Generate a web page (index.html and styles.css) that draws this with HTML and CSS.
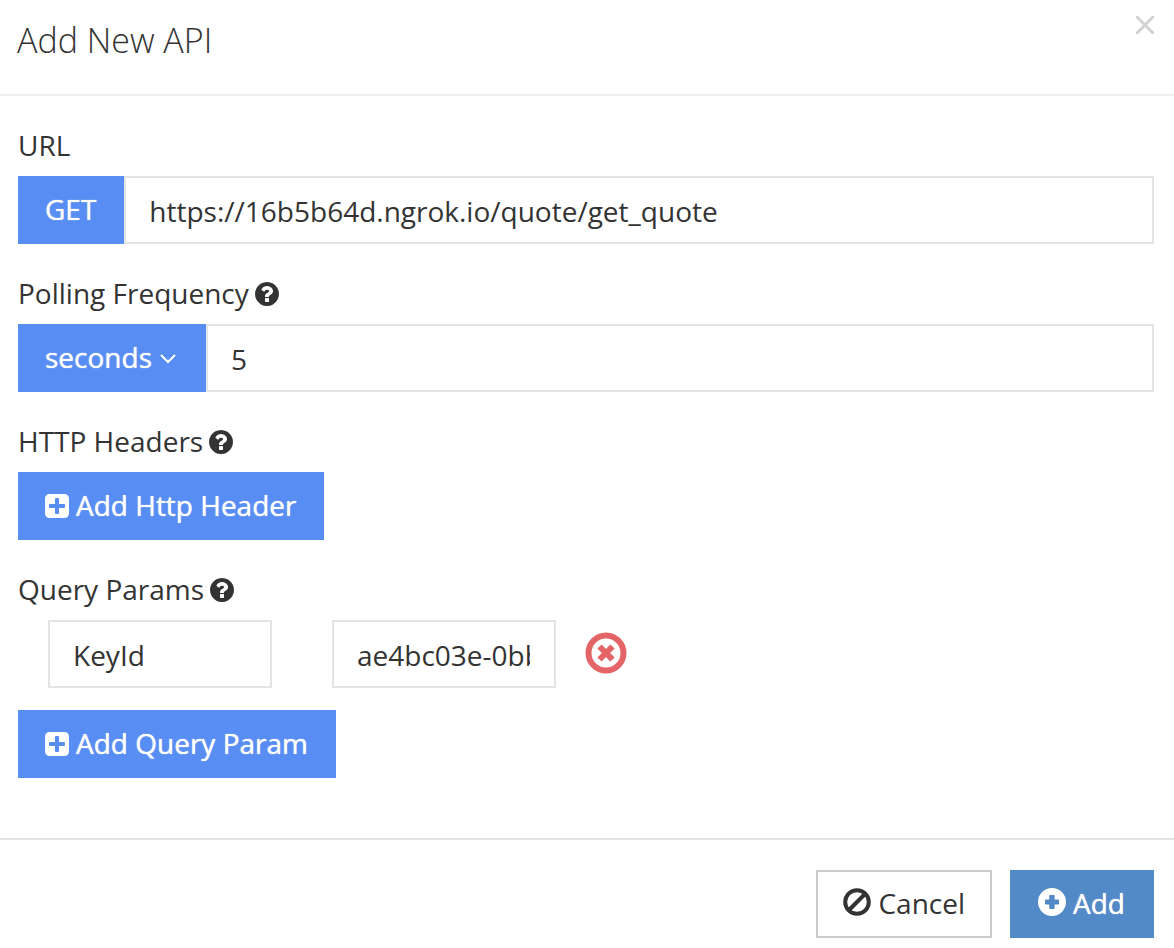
FILE: index.html
```html
<!DOCTYPE html>
<html lang="en">
<head>
<meta charset="utf-8">
<title>Add New API</title>
<link rel="stylesheet" href="styles.css">
</head>
<body>
<svg class="sprite" aria-hidden="true">
  <symbol id="help" viewBox="128 128 1536 1536"><path d="M1024 1376v-192q0-14-9-23t-23-9h-192q-14 0-23 9t-9 23v192q0 14 9 23t23 9h192q14 0 23-9t9-23zm256-672q0-88-55.5-163t-138.5-116-170-41q-243 0-371 213-15 24 8 42l132 100q7 6 19 6 16 0 25-12 53-68 86-92 34-24 86-24 48 0 85.5 26t37.5 59q0 38-20 61t-68 45q-63 28-115.5 86.5t-52.5 125.5v36q0 14 9 23t23 9h192q14 0 23-9t9-23q0-19 21.5-49.5t54.5-49.5q32-18 49-28.5t46-35 44.5-48 28-60.5 12.5-81zm384 192q0 209-103 385.5t-279.5 279.5-385.5 103-385.5-103-279.5-279.5-103-385.5 103-385.5 279.5-279.5 385.5-103 385.5 103 279.5 279.5 103 385.5z"/></symbol>
  <symbol id="plus-square" viewBox="0 0 24 24"><path fill-rule="evenodd" d="M4.5 0h15A4.5 4.5 0 0 1 24 4.500v15a4.500 4.500 0 0 1-4.500 4.500h-15A4.500 4.500 0 0 1 0 19.500v-15A4.500 4.500 0 0 1 4.500 0zM11 4a1 1 0 0 0-1 1v5H5a1 1 0 0 0-1 1v2a1 1 0 0 0 1 1h5V19a1 1 0 0 0 1 1h2a1 1 0 0 0 1-1v-5h5a1 1 0 0 0 1-1v-2a1 1 0 0 0-1-1h-5V5a1 1 0 0 0-1-1z"/></symbol>
</svg>
<form class="modal">
  <header class="modal-header">
    <h1 class="modal-title">Add New API</h1>
    <button class="close" type="button" aria-label="Close">
      <svg class="close-icon" viewBox="0 0 18 18"><path d="M0 0l18 18M18 0L0 18"/></svg>
    </button>
  </header>

  <main class="modal-body">
    <div class="group">
      <label class="label" for="url">URL</label>
      <div class="input-group">
        <button class="btn btn-blue" type="button">GET</button>
        <input class="input joined" id="url" type="text" value="https://16b5b64d.ngrok.io/quote/get_quote">
      </div>
    </div>

    <div class="group">
      <label class="label" for="frequency">Polling Frequency <svg class="help-icon"><use href="#help"/></svg></label>
      <div class="input-group">
        <div class="unit">
          <select class="btn btn-blue unit-select" aria-label="Polling unit"><option>seconds</option></select>
          <svg class="chevron" viewBox="0 0 16 10"><path d="M1 1l7 7 7-7"/></svg>
        </div>
        <input class="input joined" id="frequency" type="text" value="5">
      </div>
    </div>

    <div class="group">
      <div class="label">HTTP Headers <svg class="help-icon"><use href="#help"/></svg></div>
      <button class="btn btn-blue" type="button"><svg class="plus-icon"><use href="#plus-square"/></svg>Add Http Header</button>
    </div>

    <div class="group">
      <div class="label">Query Params <svg class="help-icon"><use href="#help"/></svg></div>
      <div class="param-row">
        <input class="input param" type="text" aria-label="Parameter name" value="KeyId">
        <input class="input param" type="text" aria-label="Parameter value" value="ae4bc03e-0bb4">
        <button class="remove" type="button" aria-label="Remove parameter">
          <svg class="remove-icon" viewBox="0 0 42 42"><circle cx="21" cy="21" r="17.500"/><path d="M14.500 14.500l13 13M27.500 14.500l-13 13"/></svg>
        </button>
      </div>
      <button class="btn btn-blue" type="button"><svg class="plus-icon"><use href="#plus-square"/></svg>Add Query Param</button>
    </div>
  </main>

  <footer class="modal-footer">
    <button class="btn btn-default" type="button"><svg class="round-icon ban" viewBox="0 0 28 28"><circle cx="14" cy="14" r="11.800"/><path d="M6 22L22 6"/></svg>Cancel</button>
    <button class="btn btn-primary" type="submit"><svg class="round-icon" viewBox="0 0 28 28"><path fill-rule="evenodd" d="M14 0a14 14 0 1 1 0 28a14 14 0 1 1 0-28zM12 7a.8.8 0 0 0-.8.8v3.700H7.800a.8.8 0 0 0-.8.8v3.400a.8.8 0 0 0 .8.8h3.400v3.700a.8.8 0 0 0 .8.8h3.800a.8.8 0 0 0 .8-.8v-3.700h3.600a.8.8 0 0 0 .8-.8v-3.400a.8.8 0 0 0-.8-.8h-3.600V7.800a.8.8 0 0 0-.8-.8z"/></svg>Add</button>
  </footer>
</form>
</body>
</html>
```
FILE: styles.css
```css
* {
  box-sizing: border-box;
}

body {
  margin: 0;
  background: #fff;
  color: #333;
  font: 28px/38px "Open Sans", sans-serif;
}

.sprite {
  display: none;
}

.modal-header {
  display: flex;
  justify-content: space-between;
  align-items: flex-start;
  padding: 16px 20px 30px 17px;
  border-bottom: 2px solid #efefef;
}

.modal-title {
  margin: 0;
  font-size: 34px;
  line-height: 48px;
  font-weight: 300;
}

.close,
.remove {
  display: flex;
  padding: 0;
  border: 0;
  background: none;
}

.close-icon {
  width: 18px;
  height: 18px;
  stroke: #d2d2d2;
  stroke-width: 3;
}

.modal-body {
  padding: 30px 20px 30px 18px;
}

.group {
  margin-bottom: 30px;
}

.label {
  display: block;
  height: 38px;
  margin-bottom: 12px;
}

.help-icon {
  width: 24px;
  height: 24px;
  margin-left: -1px;
  vertical-align: -2px;
  fill: #333;
}

.input-group {
  display: flex;
}

.btn {
  display: inline-flex;
  align-items: center;
  justify-content: center;
  height: 68px;
  padding: 0 28px 2px 27px;
  border: 0;
  border-radius: 0;
  color: #fff;
  font: inherit;
  white-space: nowrap;
}

.btn-blue {
  background: #588ef3;
  text-shadow: 0 0 1px #fff;
}

.input {
  min-width: 0;
  height: 68px;
  padding: 2px 24px 0 23px;
  border: 2px solid #e4e4e4;
  border-radius: 0;
  background: #fff;
  color: #333;
  font: inherit;
}

.joined {
  flex: 1;
}

.unit {
  display: flex;
  position: relative;
}

.unit-select {
  appearance: none;
  padding-right: 54px;
}

.chevron {
  position: absolute;
  right: 30px;
  top: 30px;
  width: 16px;
  height: 10px;
  fill: none;
  stroke: #fff;
  stroke-width: 2;
  pointer-events: none;
}

.plus-icon {
  width: 24px;
  height: 24px;
  margin: 2px 7px 0 0;
  fill: #fff;
}

.param-row {
  display: flex;
  align-items: center;
  margin: 0 0 22px 30px;
}

.param {
  width: 224px;
  margin-right: 60px;
}

.param + .param {
  margin-right: 29px;
}

.remove {
  padding-bottom: 2px;
}

.remove-icon {
  width: 42px;
  height: 42px;
  fill: none;
  stroke: #e46567;
  stroke-width: 6;
}

.modal-footer {
  display: flex;
  justify-content: flex-end;
  gap: 18px;
  padding: 30px 20px 10px;
  border-top: 2px solid #e4e4e4;
}

.btn-default {
  padding: 0 25px 2px;
  border: 2px solid #ccc;
  background: #fff;
  color: #333;
}

.btn-primary {
  padding: 0 29px 2px 28px;
  background: #5289c7;
  text-shadow: 0 0 1px #fff;
}

.round-icon {
  width: 28px;
  height: 28px;
  margin: 0 7px 2px 0;
  fill: #fff;
}

.ban {
  fill: none;
  stroke: #333;
  stroke-width: 4;
}
```
